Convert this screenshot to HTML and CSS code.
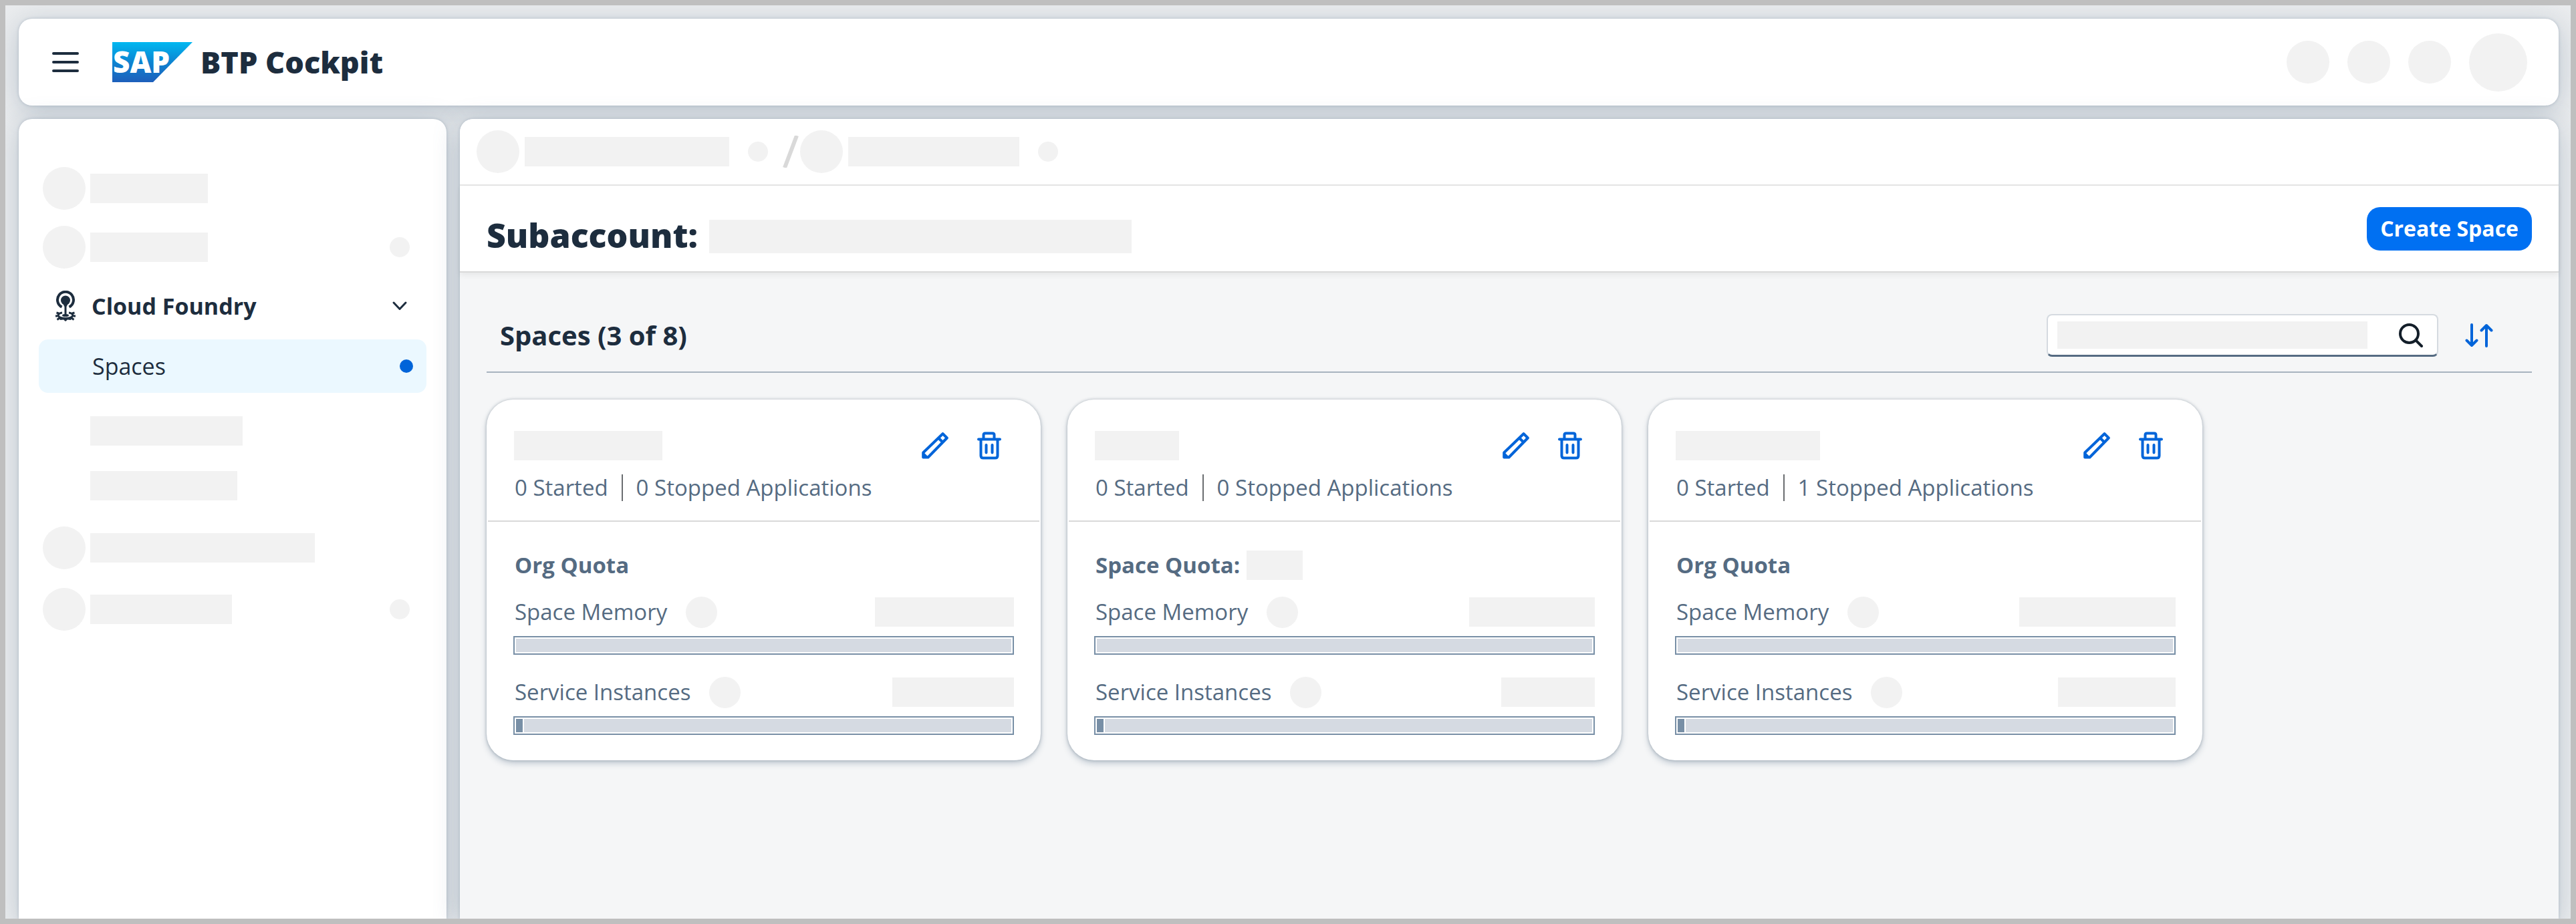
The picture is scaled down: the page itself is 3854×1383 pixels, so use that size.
FILE: index.html
```html
<!DOCTYPE html>
<html lang="en">
<head>
<meta charset="utf-8">
<title>BTP Cockpit</title>
<meta name="viewport" content="width=device-width, initial-scale=1">
<link rel="stylesheet" href="styles.css">
</head>
<body>
<svg class="sprite" aria-hidden="true">
  <symbol id="icon-edit" viewBox="0 0 40 40">
    <path d="M31.500 2.200 L37.800 8.500 L9.500 37.500 H2.200 V30.500 Z" fill="none" stroke="currentColor" stroke-width="4" stroke-linejoin="round"/>
    <path d="M25 8.500 L31.500 15" stroke="currentColor" stroke-width="4"/>
    <path d="M2 29 L11 38 H2 Z" fill="currentColor"/>
  </symbol>
  <symbol id="icon-delete" viewBox="0 0 36 42">
    <path d="M2 11.500 H34 M9.500 11 V5 Q9.500 2.500 12 2.500 H23 Q25.500 2.500 25.500 5 V11 M5.500 12 V36 Q5.500 39.500 9 39.500 H27 Q30.500 39.500 30.500 36 V12 M13.500 20 V31.500 M22.500 20 V31.500" fill="none" stroke="currentColor" stroke-width="4" stroke-linecap="round"/>
  </symbol>
</svg>

<header class="shell panel">
  <button class="icon-button" type="button" aria-label="Menu">
    <svg width="40" height="32" viewBox="0 0 40 32"><path d="M2 3H38M2 16H38M2 29H38" stroke="currentColor" stroke-width="4" stroke-linecap="round"/></svg>
  </button>
  <svg class="logo" width="120" height="60" viewBox="0 0 120 60" role="img" aria-label="SAP">
    <defs><linearGradient id="sap" x1="0" y1="0" x2="0" y2="1"><stop offset="0" stop-color="#00b8f1"/><stop offset=".5" stop-color="#0d84d1"/><stop offset="1" stop-color="#1e5fbb"/></linearGradient></defs>
    <path d="M0 0H120L61 60H0Z" fill="url(#sap)"/>
    <text class="logo-text" x="1" y="46">SAP</text>
  </svg>
  <h1 class="product">BTP Cockpit</h1>
  <div class="shell-actions">
    <span class="dot dot-l"></span><span class="dot dot-l"></span><span class="dot dot-l"></span><span class="dot dot-xl"></span>
  </div>
</header>

<div class="columns">
  <nav class="sidebar panel" aria-label="Navigation">
    <ul class="nav-list">
      <li class="nav-row"><span class="dot dot-l"></span><span class="bone w-176"></span></li>
      <li class="nav-row"><span class="dot dot-l"></span><span class="bone w-176"></span><span class="dot dot-s push"></span></li>
      <li class="nav-row">
        <svg class="nav-icon" width="64" height="46" viewBox="0 0 64 46" aria-hidden="true">
          <path d="M28.500 24.500A12 12 0 1 1 39.500 24.500" fill="none" stroke="currentColor" stroke-width="4"/>
          <circle cx="34" cy="14.500" r="7" fill="currentColor"/>
          <path d="M30 19L32.500 24V37H35.500V24L38 19Z" fill="currentColor"/>
          <ellipse cx="34" cy="37" rx="5" ry="2" fill="currentColor"/>
          <path d="M29 33C21 34 20 41 34 41.500C48 41 47 34 39 33" fill="none" stroke="currentColor" stroke-width="3"/>
          <path d="M24 34L20.500 33M22.500 38H19M25 41L21.500 43.500M44 34L47.500 33M45.500 38H49M43 41L46.500 43.500" stroke="currentColor" stroke-width="3"/>
          <path d="M24 40Q34 45 44 40L42 44L37 43.500L34 46L31 43.500L26 44Z" fill="currentColor"/>
        </svg>
        <a class="nav-title" href="#cloud-foundry">Cloud Foundry</a>
        <svg class="chevron push" width="24" height="16" viewBox="0 0 24 16" aria-hidden="true"><path d="M3 3L12 12.500L21 3" fill="none" stroke="currentColor" stroke-width="3" stroke-linecap="round" stroke-linejoin="round"/></svg>
      </li>
      <li>
        <ul class="nav-list nav-sub">
          <li><a class="nav-current" href="#spaces" aria-current="page">Spaces<span class="marker"></span></a></li>
          <li class="nav-row nav-child"><span class="bone w-228"></span></li>
          <li class="nav-row nav-child"><span class="bone w-220"></span></li>
        </ul>
      </li>
      <li class="nav-row nav-lower"><span class="dot dot-l"></span><span class="bone w-336"></span></li>
      <li class="nav-row nav-lower"><span class="dot dot-l"></span><span class="bone w-212"></span><span class="dot dot-s push"></span></li>
    </ul>
  </nav>

  <main class="content panel">
    <div class="crumbs">
      <span class="dot dot-l"></span><span class="bone w-306"></span><span class="dot dot-s crumb-dot"></span>
      <svg class="slash" width="24" height="48" viewBox="0 0 24 48" aria-hidden="true"><path d="M3 48L21 0" stroke="#d9d9d9" stroke-width="6"/></svg>
      <span class="dot dot-l"></span><span class="bone w-256"></span><span class="dot dot-s crumb-dot"></span>
    </div>
    <div class="page-head">
      <h2 class="page-title">Subaccount:</h2>
      <span class="bone bone-tall w-632"></span>
      <button class="primary" type="button">Create Space</button>
    </div>

    <section class="spaces" id="spaces">
      <div class="toolbar">
        <h3 class="toolbar-title">Spaces (3 of 8)</h3>
        <form class="search" role="search">
          <input class="search-input" type="search" aria-label="Search spaces">
          <button class="icon-button" type="button" aria-label="Search">
            <svg width="38" height="38" viewBox="0 0 38 38"><circle cx="16.500" cy="16.500" r="13.500" fill="none" stroke="#131e29" stroke-width="4"/><path d="M26 26L35 35" stroke="#131e29" stroke-width="4" stroke-linecap="round"/></svg>
          </button>
        </form>
        <button class="icon-button sort" type="button" aria-label="Sort">
          <svg width="42" height="36" viewBox="0 0 42 36"><path d="M10 2V33M2.500 25.500L10 33L17.500 25.500M32 34V3M24.500 10.500L32 3L39.500 10.500" fill="none" stroke="currentColor" stroke-width="4" stroke-linecap="round" stroke-linejoin="round"/></svg>
        </button>
      </div>

      <div class="cards">
        <article class="card">
          <div class="card-head">
            <div class="card-row">
              <span class="bone w-222"></span>
              <button class="icon-button push" type="button" aria-label="Edit"><svg width="40" height="40"><use href="#icon-edit"/></svg></button>
              <button class="icon-button" type="button" aria-label="Delete"><svg width="36" height="42"><use href="#icon-delete"/></svg></button>
            </div>
            <p class="apps"><span>0 Started</span><span class="apps-stopped">0 Stopped Applications</span></p>
          </div>
          <div class="card-body">
            <h4 class="quota">Org Quota</h4>
            <div class="metric"><span>Space Memory</span><span class="dot dot-m"></span><span class="bone push w-208"></span></div>
            <div class="bar"><span class="bar-rest"></span></div>
            <div class="metric"><span>Service Instances</span><span class="dot dot-m"></span><span class="bone push w-182"></span></div>
            <div class="bar"><span class="bar-used"></span><span class="bar-rest"></span></div>
          </div>
        </article>

        <article class="card">
          <div class="card-head">
            <div class="card-row">
              <span class="bone w-126"></span>
              <button class="icon-button push" type="button" aria-label="Edit"><svg width="40" height="40"><use href="#icon-edit"/></svg></button>
              <button class="icon-button" type="button" aria-label="Delete"><svg width="36" height="42"><use href="#icon-delete"/></svg></button>
            </div>
            <p class="apps"><span>0 Started</span><span class="apps-stopped">0 Stopped Applications</span></p>
          </div>
          <div class="card-body">
            <h4 class="quota">Space Quota:<span class="bone w-84"></span></h4>
            <div class="metric"><span>Space Memory</span><span class="dot dot-m"></span><span class="bone push w-188"></span></div>
            <div class="bar"><span class="bar-rest"></span></div>
            <div class="metric"><span>Service Instances</span><span class="dot dot-m"></span><span class="bone push w-140"></span></div>
            <div class="bar"><span class="bar-used"></span><span class="bar-rest"></span></div>
          </div>
        </article>

        <article class="card">
          <div class="card-head">
            <div class="card-row">
              <span class="bone w-216"></span>
              <button class="icon-button push" type="button" aria-label="Edit"><svg width="40" height="40"><use href="#icon-edit"/></svg></button>
              <button class="icon-button" type="button" aria-label="Delete"><svg width="36" height="42"><use href="#icon-delete"/></svg></button>
            </div>
            <p class="apps"><span>0 Started</span><span class="apps-stopped">1 Stopped Applications</span></p>
          </div>
          <div class="card-body">
            <h4 class="quota">Org Quota</h4>
            <div class="metric"><span>Space Memory</span><span class="dot dot-m"></span><span class="bone push w-234"></span></div>
            <div class="bar"><span class="bar-rest"></span></div>
            <div class="metric"><span>Service Instances</span><span class="dot dot-m"></span><span class="bone push w-176"></span></div>
            <div class="bar"><span class="bar-used"></span><span class="bar-rest"></span></div>
          </div>
        </article>
      </div>
    </section>
  </main>
</div>
</body>
</html>
```
FILE: styles.css
```css
* { box-sizing: border-box; }

:root {
  --ink: #1d2d3e;
  --muted: #556b82;
  --link: #0064d9;
  --bone: #f2f2f2;
}

body {
  margin: 0;
  min-height: 100vh;
  display: flex;
  flex-direction: column;
  gap: 20px;
  padding: 20px 18px 0 20px;
  border: 8px solid #bfbfbf;
  background: #eaecee;
  color: var(--ink);
  font: 33px/40px "Open Sans", "Noto Sans", sans-serif;
}

h1, h2, h3, h4, p, ul { margin: 0; padding: 0; }
ul { list-style: none; }
a { color: inherit; text-decoration: none; }
svg { display: block; flex: none; }
button { font: inherit; border: 0; cursor: pointer; }
.sprite { position: absolute; width: 0; height: 0; }

.panel {
  background: #fff;
  box-shadow: 0 0 4px rgba(91, 115, 139, .32), 0 8px 40px rgba(91, 115, 139, .32);
  clip-path: inset(-40px -40px 0);
}
.shell.panel { clip-path: none; }

.icon-button {
  flex: none;
  padding: 0;
  background: none;
  color: inherit;
}

.push { margin-left: auto; }

/* Loading placeholders */
.bone {
  flex: none;
  height: 44px;
  background: var(--bone);
}
.bone-tall { height: 50px; }
.dot {
  flex: none;
  border-radius: 50%;
  background: var(--bone);
}
.dot-s { width: 30px; height: 30px; }
.dot-m { width: 47px; height: 47px; }
.dot-l { width: 64px; height: 64px; }
.dot-xl { width: 87px; height: 87px; }

.w-84 { width: 84px; }
.w-126 { width: 126px; }
.w-140 { width: 140px; }
.w-176 { width: 176px; }
.w-182 { width: 182px; }
.w-188 { width: 188px; }
.w-208 { width: 208px; }
.w-212 { width: 212px; }
.w-216 { width: 216px; }
.w-220 { width: 220px; }
.w-222 { width: 222px; }
.w-228 { width: 228px; }
.w-234 { width: 234px; }
.w-256 { width: 256px; }
.w-306 { width: 306px; }
.w-336 { width: 336px; }
.w-632 { width: 632px; }

/* Shell bar */
.shell {
  display: flex;
  align-items: center;
  height: 130px;
  padding: 0 47px 0 50px;
  border-radius: 20px;
}
.logo { margin: 0 12px 0 50px; }
.logo-text {
  fill: #fff;
  font: 800 44px "Open Sans", sans-serif;
}
.product {
  font-size: 45px;
  font-weight: 800;
  line-height: 48px;
}
.shell-actions {
  display: flex;
  align-items: center;
  gap: 27px;
  margin-left: auto;
}

.columns {
  flex: 1;
  display: flex;
  gap: 20px;
}

/* Side navigation */
.sidebar {
  flex: none;
  width: 640px;
  padding: 60px 30px 0;
  border-radius: 20px 20px 0 0;
}
.nav-row {
  display: flex;
  align-items: center;
  gap: 7px;
  height: 88px;
  padding: 0 25px 0 6px;
}
.nav-title {
  padding-left: 2px;
  font-size: 34px;
  font-weight: 700;
}
.chevron { margin-right: 3px; }
.nav-sub { padding: 6px 0; }
.nav-current {
  display: flex;
  align-items: center;
  justify-content: space-between;
  height: 80px;
  margin-bottom: 16px;
  padding: 0 20px 0 80px;
  border-radius: 14px;
  background: #ebf8ff;
  font-size: 34px;
}
.marker {
  width: 20px;
  height: 20px;
  border-radius: 50%;
  background: var(--link);
}
.nav-child {
  height: 82px;
  padding-left: 77px;
}
.nav-lower { height: 92px; }

/* Content */
.content {
  flex: 1;
  min-width: 0;
  border-radius: 20px 20px 0 0;
  background: #f5f6f7;
}
.crumbs {
  display: flex;
  align-items: center;
  gap: 8px;
  height: 100px;
  padding-left: 25px;
  border-bottom: 2px solid #e5e5e5;
  border-radius: 20px 20px 0 0;
  background: #fff;
}
.crumb-dot { margin: 0 14px 0 20px; }
.slash { margin-right: -6px; }
.page-head {
  display: flex;
  align-items: center;
  gap: 17px;
  height: 130px;
  padding: 0 40px;
  border-bottom: 2px solid #d9d9d9;
  background: #fff;
  box-shadow: 0 4px 8px rgba(0, 0, 0, .06);
}
.page-title {
  padding-top: 20px;
  font-size: 50px;
  font-weight: 800;
  line-height: 60px;
}
.page-head .bone { margin-top: 24px; }
.primary {
  margin-left: auto;
  height: 65px;
  padding: 0 20px;
  border-radius: 20px;
  background: #0070f2;
  color: #fff;
  font-size: 32px;
  font-weight: 700;
}

.spaces { padding: 40px; }
.toolbar {
  display: flex;
  align-items: center;
  height: 110px;
  padding: 0 58px 0 20px;
  border-bottom: 2px solid #a8b3bf;
}
.toolbar-title {
  font-size: 40px;
  font-weight: 700;
}
.search {
  display: flex;
  align-items: center;
  gap: 46px;
  width: 586px;
  height: 64px;
  margin-left: auto;
  padding: 0 20px 0 14px;
  border: 2px solid #d5dae0;
  border-bottom: 3px solid var(--muted);
  border-radius: 8px;
  background: #fff;
}
.search-input {
  flex: 1;
  min-width: 0;
  height: 41px;
  padding: 0 8px;
  border: 0;
  background: var(--bone);
  font: inherit;
}
.sort {
  margin-left: 40px;
  color: var(--link);
}

/* Space cards */
.cards {
  display: flex;
  flex-wrap: wrap;
  gap: 40px;
  padding-top: 40px;
}
.card {
  width: 829px;
  max-width: 100%;
  border-radius: 40px;
  background: #fff;
  color: var(--muted);
  box-shadow: 0 0 4px rgba(34, 53, 72, .3), 0 5px 10px rgba(91, 115, 139, .32);
}
.card-head {
  margin: 0 2px;
  padding: 47px 38px 29px;
  border-bottom: 2px solid #d9d9d9;
}
.card-row {
  display: flex;
  align-items: center;
  gap: 43px;
  height: 44px;
  padding: 0 19px 0 1px;
  color: var(--link);
}
.apps {
  display: flex;
  gap: 20px;
  padding: 21px 2px 0;
}
.apps-stopped {
  padding-left: 20px;
  border-left: 2px solid #6a6d70;
}
.card-body { padding: 45px 40px 38px; }
.quota {
  display: flex;
  align-items: center;
  gap: 10px;
  height: 40px;
  padding-left: 2px;
  font-size: 33px;
  font-weight: 700;
}
.metric {
  display: flex;
  align-items: center;
  gap: 28px;
  height: 48px;
  margin: 26px 0 12px;
  padding-left: 2px;
}
.bar {
  display: flex;
  gap: 2px;
  height: 28px;
  padding: 2px;
  border: 2px solid #788fa6;
}
.bar + .metric { margin-top: 32px; }
.bar-used {
  width: 10px;
  background: #788fa6;
}
.bar-rest {
  flex: 1;
  background: #d5dae2;
}
```
